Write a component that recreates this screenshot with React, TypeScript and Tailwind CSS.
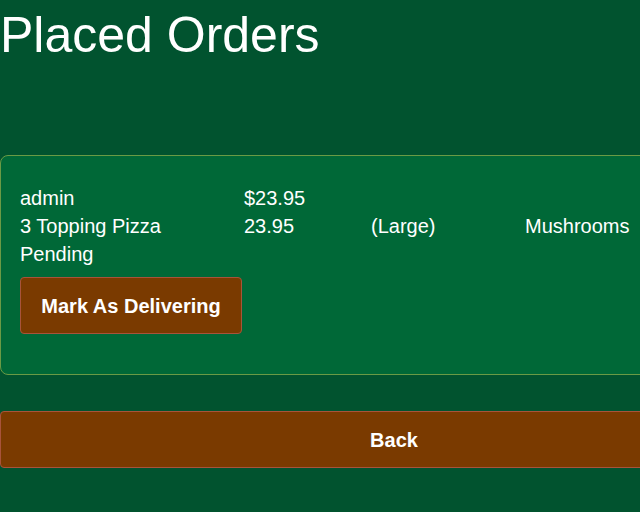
export default function App() {
  const rows = [
    ['admin', '$23.95', '', ''],
    ['3 Topping Pizza', '23.95', '(Large)', 'Mushrooms'],
    ['Pending', '', '', ''],
  ];

  return (
    <div className="min-h-screen w-full overflow-hidden bg-[#01532f] text-white font-['Liberation_Sans',Arial,sans-serif]">
      <div className="w-[788px]">
        <h1 className="mt-[8px] text-[50px] leading-[55px] font-normal">Placed Orders</h1>

        <div className="mt-[92px] rounded-lg border border-[#6a9a45] bg-[#006837] pl-[19px] pt-[28px] pb-[40px]">
          <div className="grid grid-cols-[224px_127px_154px_auto] text-[20px] leading-[28px]">
            {rows.map((row, i) =>
              row.map((cell, j) => (
                <div key={`${i}-${j}`} className="whitespace-nowrap">
                  {cell}
                </div>
              ))
            )}
          </div>
          <button className="mt-[9px] h-[57px] w-[222px] rounded border border-[#a8533a] bg-[#7a3a00] text-[20px] font-bold text-white">
            Mark As Delivering
          </button>
        </div>

        <button className="mt-[36px] h-[57px] w-full rounded border border-[#a8533a] bg-[#7a3a00] text-[20px] font-bold text-white">
          Back
        </button>
      </div>
    </div>
  );
}
